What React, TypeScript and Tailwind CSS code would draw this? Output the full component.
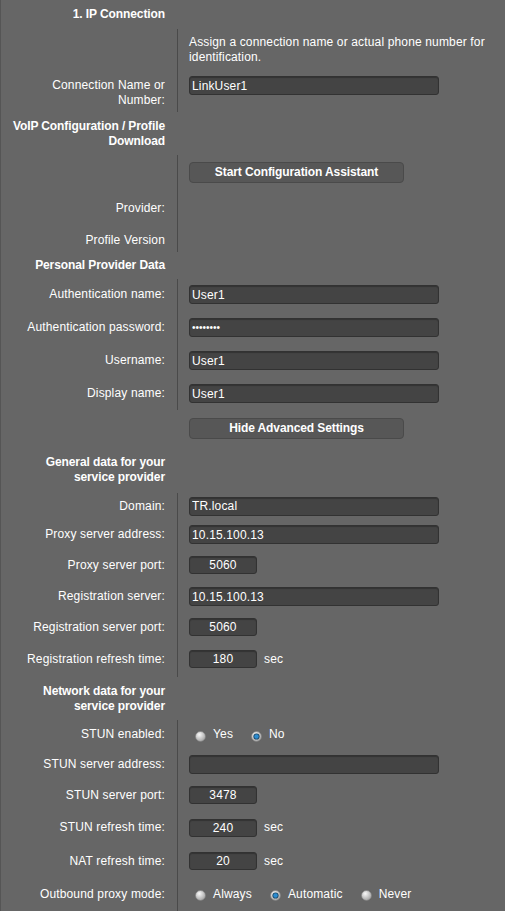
import React from 'react'

type RowProps = {
  label?: React.ReactNode
  h: string
  divider?: boolean
  bold?: boolean
  top?: boolean
  children?: React.ReactNode
}

function Row({ label, h, divider = true, bold, top, children }: RowProps) {
  return (
    <div className={`flex ${h}`}>
      <div
        className={`w-[177px] shrink-0 flex justify-end text-right pl-[8px] pr-[12px] border-r ${
          divider ? 'border-[#4a4a4a]' : 'border-transparent'
        } ${top ? 'items-start pt-[8px]' : 'items-center'} ${bold ? 'font-bold tracking-[-0.1px]' : ''}`}
      >
        <span>{label}</span>
      </div>
      <div className={`flex-1 min-w-0 pl-[11px] pr-[10px] flex ${top ? 'items-start pt-[7px]' : 'items-center'}`}>
        {children}
      </div>
    </div>
  )
}

function TextBox({ value = '', type = 'text' }: { value?: string; type?: string }) {
  return (
    <input
      type={type}
      defaultValue={value}
      className={`w-[250px] h-[19px] bg-[#444444] border border-[#323232] rounded-[3px] pl-[2px] text-white outline-none shadow-[inset_0_1px_1px_rgba(0,0,0,0.25)] ${
        type === 'password' ? 'text-[10px] tracking-[0px]' : 'text-[12px]'
      }`}
    />
  )
}

function SmallBox({ value }: { value: string }) {
  return (
    <input
      defaultValue={value}
      className="w-[68px] h-[18px] bg-[#444444] border border-[#323232] rounded-[3px] text-center text-[12px] text-white outline-none shadow-[inset_0_1px_1px_rgba(0,0,0,0.25)]"
    />
  )
}

function Button({ children }: { children: React.ReactNode }) {
  return (
    <button className="w-[215px] h-[21px] bg-[#575757] border border-[#4a4a4a] rounded-[4px] text-[12px] font-bold tracking-[-0.1px] text-white leading-[15px]">
      {children}
    </button>
  )
}

function Radio({ checked }: { checked?: boolean }) {
  return (
    <svg width="11" height="11" viewBox="0 0 11 11" className="shrink-0 mt-[3px]">
      <defs>
        <radialGradient id="radioFill" cx="38%" cy="32%" r="70%">
          <stop offset="0%" stopColor="#f8f8f8" />
          <stop offset="100%" stopColor="#a4a4a4" />
        </radialGradient>
      </defs>
      <circle cx="5.5" cy="5.5" r="5" fill="url(#radioFill)" stroke="#808080" strokeWidth="0.6" />
      {checked && (
        <>
          <circle cx="5.5" cy="5.5" r="3.1" fill="#1a4766" />
          <circle cx="5.5" cy="5.5" r="2.2" fill="#2b8bd0" />
        </>
      )}
    </svg>
  )
}

function RadioGroup({ options, selected }: { options: string[]; selected: string }) {
  return (
    <div className="flex items-center gap-[18px] pl-[6px]">
      {options.map(o => (
        <label key={o} className="flex items-center gap-[7px]">
          <Radio checked={o === selected} />
          <span>{o}</span>
        </label>
      ))}
    </div>
  )
}

export default function App() {
  return (
    <div className="min-h-screen w-[505px] bg-[#666666] border-l border-[#555555] text-white text-[12px] leading-[15px] tracking-[0.15px] font-['Liberation_Sans',Arial,sans-serif]">
      {/* 1. IP Connection */}
      <Row h="h-[29px]" divider={false} bold label="1. IP Connection" />
      <Row h="h-[41px]">
        <p>Assign a connection name or actual phone number for identification.</p>
      </Row>
      <Row h="h-[42px]" top label="Connection Name or Number:">
        <div className="-mt-[1px]">
          <TextBox value="LinkUser1" />
        </div>
      </Row>

      {/* VoIP configuration */}
      <Row h="h-[43px]" divider={false} bold label="VoIP Configuration / Profile Download" />
      <Row h="h-[34px]">
        <Button>Start Configuration Assistant</Button>
      </Row>
      <Row h="h-[39px]" label="Provider:" />
      <Row h="h-[24px]" label="Profile Version" />

      {/* Personal provider data */}
      <Row h="h-[27px]" divider={false} bold label="Personal Provider Data" />
      <Row h="h-[31px]" label="Authentication name:">
        <TextBox value="User1" />
      </Row>
      <Row h="h-[34px]" label="Authentication password:">
        <TextBox type="password" value="12345678" />
      </Row>
      <Row h="h-[33px]" label="Username:">
        <TextBox value="User1" />
      </Row>
      <Row h="h-[33px]" label="Display name:">
        <TextBox value="User1" />
      </Row>
      <Row h="h-[37px]" divider={false}>
        <Button>Hide Advanced Settings</Button>
      </Row>

      {/* General data */}
      <Row h="h-[46px]" divider={false} bold label="General data for your service provider" />
      <Row h="h-[26px]" label="Domain:">
        <TextBox value="TR.local" />
      </Row>
      <Row h="h-[31px]" label="Proxy server address:">
        <TextBox value="10.15.100.13" />
      </Row>
      <Row h="h-[30px]" label="Proxy server port:">
        <SmallBox value="5060" />
      </Row>
      <Row h="h-[33px]" label="Registration server:">
        <TextBox value="10.15.100.13" />
      </Row>
      <Row h="h-[28px]" label="Registration server port:">
        <SmallBox value="5060" />
      </Row>
      <Row h="h-[36px]" label="Registration refresh time:">
        <SmallBox value="180" />
        <span className="ml-[7px]">sec</span>
      </Row>

      {/* Network data */}
      <Row h="h-[43px]" divider={false} bold label="Network data for your service provider" />
      <Row h="h-[29px]" label="STUN enabled:">
        <RadioGroup options={['Yes', 'No']} selected="No" />
      </Row>
      <Row h="h-[31px]" label="STUN server address:">
        <TextBox />
      </Row>
      <Row h="h-[30px]" label="STUN server port:">
        <SmallBox value="3478" />
      </Row>
      <Row h="h-[35px]" label="STUN refresh time:">
        <SmallBox value="240" />
        <span className="ml-[7px]">sec</span>
      </Row>
      <Row h="h-[32px]" label="NAT refresh time:">
        <SmallBox value="20" />
        <span className="ml-[7px]">sec</span>
      </Row>
      <Row h="h-[34px]" label="Outbound proxy mode:">
        <RadioGroup options={['Always', 'Automatic', 'Never']} selected="Automatic" />
      </Row>
    </div>
  )
}
